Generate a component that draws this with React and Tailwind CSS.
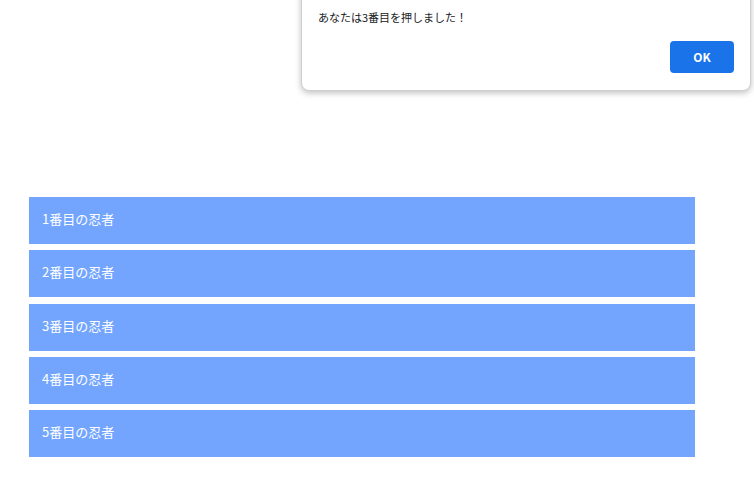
const ninjas = [1, 2, 3, 4, 5];

export default function App() {
  return (
    <div
      className="relative min-h-[494px] w-full bg-white"
      style={{ fontFamily: '"Noto Sans CJK JP", "Noto Sans", sans-serif' }}
    >
      {/* Ninja list */}
      <div className="flex flex-col gap-[6px] pl-[29px] pt-[197px]">
        {ninjas.map((n) => (
          <button
            key={n}
            className={
              "flex h-[47px] w-[666px] items-center bg-[#73a5ff] pb-[3px] pl-[13px] text-left text-[13px] text-white" +
              (n === 3 ? " mt-[1px]" : "")
            }
          >
            {n}番目の忍者
          </button>
        ))}
      </div>

      {/* Browser alert */}
      <div className="absolute left-[301px] top-[-10px] h-[101px] w-[450px] rounded-b-lg border border-[#cfcfcf] bg-white shadow-[0_2px_6px_rgba(0,0,0,0.25)]">
        <p className="pl-[16px] pt-[18px] text-[11px] text-[#202124]">
          あなたは3番目を押しました！
        </p>
        <div className="flex justify-end pr-[16px] pt-[15px]">
          <button className="flex h-[32px] w-[64px] items-center justify-center rounded-[4px] bg-[#1a73e8] text-[12px] font-bold text-white">
            OK
          </button>
        </div>
      </div>
    </div>
  );
}
